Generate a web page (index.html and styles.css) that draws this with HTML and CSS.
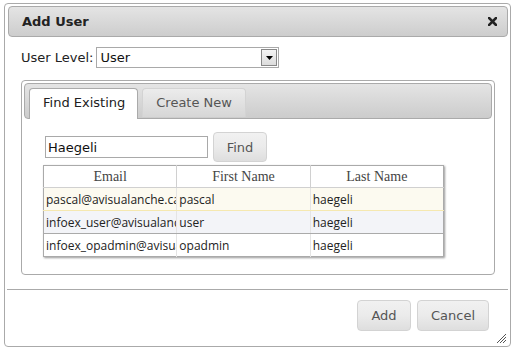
FILE: index.html
```html
<!DOCTYPE html>
<html lang="en">
<head>
<meta charset="UTF-8">
<meta name="viewport" content="width=device-width, initial-scale=1.0">
<title>Add User</title>
<link rel="stylesheet" href="styles.css">
</head>
<body>
<div class="dialog">
  <div class="titlebar">
    <span class="title">Add User</span>
    <svg class="close" width="9" height="9" viewBox="0 0 9 9">
      <path d="M1 1 L8 8 M8 1 L1 8" stroke="#222" stroke-width="2.6" stroke-linecap="square"/>
    </svg>
  </div>

  <div class="content">
    <div class="level-row">
      <label for="userLevel">User Level:</label>
      <div class="select" id="userLevel">
        <span>User</span>
        <span class="select-btn">
          <svg width="7" height="4" viewBox="0 0 7 4"><path d="M0 0 H7 L3.5 4 Z" fill="#000"/></svg>
        </span>
      </div>
    </div>

    <div class="tabs">
      <div class="tab-nav">
        <div class="tab active">Find Existing</div>
        <div class="tab">Create New</div>
      </div>
      <div class="tab-panel">
        <div class="search-row">
          <input class="search" type="text" value="Haegeli">
          <button class="btn find">Find</button>
        </div>
        <table class="grid">
          <thead>
            <tr><th>Email</th><th>First Name</th><th>Last Name</th></tr>
          </thead>
          <tbody>
            <tr class="row-hover"><td><div class="cell">pascal@avisualanche.ca</div></td><td><div class="cell">pascal</div></td><td><div class="cell">haegeli</div></td></tr>
            <tr class="row-alt"><td><div class="cell">infoex_user@avisualanche.ca</div></td><td><div class="cell">user</div></td><td><div class="cell">haegeli</div></td></tr>
            <tr><td><div class="cell">infoex_opadmin@avisualanche.ca</div></td><td><div class="cell">opadmin</div></td><td><div class="cell">haegeli</div></td></tr>
          </tbody>
        </table>
      </div>
    </div>
  </div>

  <div class="buttonpane">
    <button class="btn add">Add</button>
    <button class="btn cancel">Cancel</button>
  </div>

  <svg class="resize" width="11" height="11" viewBox="0 0 11 11">
    <path d="M1 10 L10 1 M4 10 L10 4 M7 10 L10 7" stroke="#555" stroke-width="1"/>
  </svg>
</div>
</body>
</html>
```

FILE: styles.css
```css
body {
  margin: 0;
  background-color: white;
  font-family: "DejaVu Sans", Verdana, sans-serif;
  font-size: 13px;
  color: #222;
}

.dialog {
  position: relative;
  box-sizing: border-box;
  width: 507px;
  height: 344px;
  margin: 3px 0 0 4px;
  padding: 2px 2px 2px 3px;
  border: 1px solid #aaa;
  border-radius: 4px;
  display: flex;
  flex-direction: column;
}

.titlebar {
  box-sizing: border-box;
  height: 31px;
  display: flex;
  align-items: center;
  justify-content: space-between;
  padding: 0 10px 0 13px;
  border: 1px solid #aaa;
  border-radius: 4px;
  background: linear-gradient(#e4e4e4, #cdcdcd);
}

.title {
  font-weight: bold;
  color: #222;
}

.close {
  display: block;
}

.content {
  padding: 10px 13px 0 13px;
}

.level-row {
  display: flex;
  align-items: center;
  height: 21px;
}

.level-row label {
  margin-right: 3px;
}

.select {
  box-sizing: border-box;
  width: 183px;
  height: 21px;
  border: 1px solid #a9a9a9;
  display: flex;
  align-items: center;
  justify-content: space-between;
  padding: 0 1px 0 3px;
  color: #111;
}

.select-btn {
  box-sizing: border-box;
  width: 16px;
  height: 17px;
  border: 1px solid #888;
  background: linear-gradient(#f4f4f4, #dcdcdc);
  display: flex;
  align-items: center;
  justify-content: center;
}

.select-btn svg {
  display: block;
}

.tabs {
  box-sizing: border-box;
  margin-top: 12px;
  height: 195px;
  padding: 2px;
  border: 1px solid #aaa;
  border-radius: 4px;
}

.tab-nav {
  box-sizing: border-box;
  height: 36px;
  padding: 4px 4px 0 4px;
  display: flex;
  align-items: flex-end;
  gap: 4px;
  border: 1px solid #aaa;
  border-radius: 4px;
  background: linear-gradient(#e4e4e4, #cccccc);
}

.tab {
  box-sizing: border-box;
  height: 29px;
  padding: 6px 13px 0 13px;
  border: 1px solid #d3d3d3;
  border-bottom: none;
  border-radius: 4px 4px 0 0;
  background: linear-gradient(#ececec, #d6d6d6);
  color: #555;
  align-self: flex-start;
}

.tab.active {
  height: 31px;
  margin-bottom: -1px;
  border-color: #aaa;
  background: white;
  color: #212121;
  padding-right: 12px;
}

.tab-panel {
  padding: 13px 0 0 19px;
}

.search-row {
  display: flex;
  align-items: center;
  gap: 5px;
  margin-left: 2px;
}

.search {
  box-sizing: border-box;
  width: 163px;
  height: 22px;
  margin: 0;
  padding: 0 2px;
  border: 1px solid #a9a9a9;
  font-family: "DejaVu Sans", Verdana, sans-serif;
  font-size: 13px;
  color: #111;
}

.btn {
  box-sizing: border-box;
  height: 30px;
  padding: 0;
  border: 1px solid #d3d3d3;
  border-radius: 4px;
  background: linear-gradient(#f1f1f1 0%, #ebebeb 50%, #dedede 100%);
  font-family: "DejaVu Sans", Verdana, sans-serif;
  font-size: 13px;
  color: #555;
}

.find {
  width: 54px;
}

.grid {
  margin-top: 3px;
  width: 401px;
  table-layout: fixed;
  border-collapse: collapse;
  border: 1px solid #aaa;
  box-shadow: 1px 1px 2px #999;
}

.grid th {
  height: 21px;
  padding: 0;
  font-family: "Liberation Serif", "Times New Roman", serif;
  font-size: 14px;
  font-weight: normal;
  color: #444;
  border-right: 1px solid #d0d0d0;
  border-bottom: 1px solid #d0d0d0;
}

.grid td {
  height: 22px;
  padding: 0;
  font-family: "Open Sans", sans-serif;
  font-size: 12px;
  color: #222;
  border-right: 1px solid #e4e4e4;
  border-bottom: 1px solid #aaa;
}

.cell {
  padding-left: 2px;
  white-space: nowrap;
  overflow: hidden;
}

.grid tr > :last-child {
  border-right: none;
}

.grid tbody tr:last-child td {
  border-bottom: none;
}

.row-hover td {
  background-color: #fcfaf0;
  border-bottom-color: #f5e8b0;
}

.row-alt td {
  background-color: #f3f4f8;
}

.buttonpane {
  margin-top: 14px;
  margin-left: -1px;
  border-top: 1px solid #aaa;
  padding: 10px 19px 0 0;
  display: flex;
  justify-content: flex-end;
  gap: 6px;
}

.buttonpane .btn {
  height: 31px;
}

.add {
  width: 54px;
}

.cancel {
  width: 72px;
}

.resize {
  position: absolute;
  right: 3px;
  bottom: 2px;
}
```
